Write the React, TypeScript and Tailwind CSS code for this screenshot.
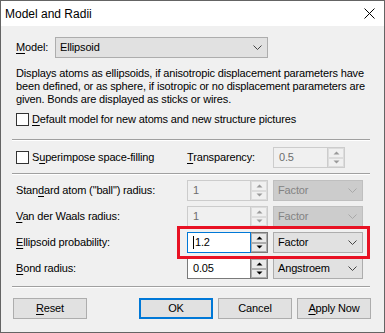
import React from "react";

const font = "font-['Liberation_Sans',Arial,sans-serif]";

function Chevron({ disabled }: { disabled?: boolean }) {
  return (
    <svg width="10" height="6" viewBox="0 0 10 6" className="shrink-0">
      <polyline
        points="0.5,0.5 4.5,4.5 8.5,0.5"
        fill="none"
        stroke={disabled ? "#a8a8a8" : "#444"}
        strokeWidth="1"
      />
    </svg>
  );
}

function Arrow({ up, disabled }: { up?: boolean; disabled?: boolean }) {
  return (
    <svg width="7" height="4" viewBox="0 0 7 4">
      <polygon
        points={up ? "0.5,3.5 3.5,0.5 6.5,3.5" : "0.5,0.5 3.5,3.5 6.5,0.5"}
        fill={disabled ? "#9a9a9a" : "#000"}
      />
    </svg>
  );
}

function Combo({ value, className, disabled }: { value: string; className: string; disabled?: boolean }) {
  return (
    <div
      className={`flex h-[21px] items-center justify-between border pl-[4px] pr-[4px] ${className} ${
        disabled ? "border-[#bfbfbf] bg-[#cccccc] text-[#838383]" : "border-[#adadad] bg-[#e1e1e1] text-black"
      }`}
    >
      <span>{value}</span>
      <Chevron disabled={disabled} />
    </div>
  );
}

function Spin({
  value,
  className,
  disabled,
  focused,
}: {
  value: string;
  className: string;
  disabled?: boolean;
  focused?: boolean;
}) {
  const edge = disabled ? "border-[#cccccc]" : "border-[#7a7a7a]";
  return (
    <div className={`flex h-[21px] ${className}`}>
      <div
        className={`flex flex-1 items-center border pl-[5px] ${
          focused ? "border-[#0078d7] bg-white" : disabled ? `${edge} bg-[#f0f0f0]` : `${edge} bg-white`
        } ${disabled ? "text-[#6d6d6d]" : "text-black"}`}
      >
        {focused && <span className="mr-[1px] h-[13px] w-[1px] bg-black" />}
        <span>{value}</span>
      </div>
      <div className={`flex w-[17px] flex-col border-y border-r ${edge} bg-[#f0f0f0]`}>
        <div
          className={`flex flex-1 items-center justify-center border ${
            disabled ? "border-[#dcdcdc]" : "border-[#adadad] bg-[#e9e9e9]"
          }`}
        >
          <Arrow up disabled={disabled} />
        </div>
        <div
          className={`flex flex-1 items-center justify-center border ${
            disabled ? "border-[#dcdcdc]" : "border-[#adadad] bg-[#e9e9e9]"
          }`}
        >
          <Arrow disabled={disabled} />
        </div>
      </div>
    </div>
  );
}

function Check({ children }: { children: React.ReactNode }) {
  return (
    <div className="flex h-[13px] items-center">
      <div className="h-[13px] w-[13px] shrink-0 border border-[#333] bg-white" />
      <span className="ml-[3px] whitespace-nowrap">{children}</span>
    </div>
  );
}

function Separator() {
  return (
    <div className="ml-[-4px] w-[358px]">
      <div className="h-[1px] bg-[#a0a0a0]" />
      <div className="h-[1px] bg-white" />
    </div>
  );
}

function Button({ children, primary }: { children: React.ReactNode; primary?: boolean }) {
  return (
    <div
      className={`flex h-[21px] w-[74px] items-center justify-center bg-[#e1e1e1] ${
        primary ? "border-2 border-[#0078d7]" : "border border-[#adadad]"
      }`}
    >
      {children}
    </div>
  );
}

const U = ({ children }: { children: React.ReactNode }) => <span className="underline underline-offset-2">{children}</span>;

export default function App() {
  return (
    <div
      className={`flex h-[333px] w-[385px] flex-col overflow-hidden border border-[#646464] bg-[#f0f0f0] text-[11px] tracking-[-0.15px] text-black ${font}`}
    >
      {/* Title bar */}
      <div className="flex h-[25px] shrink-0 items-center justify-between bg-white pl-[4px] pr-[9px]">
        <span className="text-[12px] tracking-normal">Model and Radii</span>
        <svg width="11" height="11" viewBox="0 0 11 11">
          <path d="M0.5 0.5 L10.5 10.5 M10.5 0.5 L0.5 10.5" stroke="#000" strokeWidth="1" />
        </svg>
      </div>

      <div className="flex flex-col pl-[15px]">
        {/* Model */}
        <div className="mt-[11px] flex items-center">
          <span className="w-[39px]">
            <U>M</U>odel:
          </span>
          <Combo value="Ellipsoid" className="w-[213px]" />
        </div>

        <p className="mt-[9px] whitespace-nowrap leading-[13px]">
          Displays atoms as ellipsoids, if anisotropic displacement parameters have
          <br />
          been defined, or as sphere, if isotropic or no displacement parameters are
          <br />
          given. Bonds are displayed as sticks or wires.
        </p>

        <div className="mt-[7px]">
          <Check>
            <U>D</U>efault model for new atoms and new structure pictures
          </Check>
        </div>

        <div className="mt-[13px]">
          <Separator />
        </div>

        {/* Superimpose */}
        <div className="mt-[6px] flex items-center">
          <div className="w-[171px]">
            <Check>
              S<U>u</U>perimpose space-filling
            </Check>
          </div>
          <span className="w-[86px]">
            <U>T</U>ransparency:
          </span>
          <Spin value="0.5" className="w-[72px]" disabled />
        </div>

        <div className="mt-[5px]">
          <Separator />
        </div>

        {/* Radii rows */}
        <div className="mt-[5px] flex flex-col gap-[5px]">
          <div className="flex items-center">
            <span className="w-[171px]">
              Stan<U>d</U>ard atom ("ball") radius:
            </span>
            <Spin value="1" className="w-[81px]" disabled />
            <Combo value="Factor" className="ml-[5px] w-[90px]" disabled />
          </div>
          <div className="flex items-center">
            <span className="w-[171px]">
              <U>V</U>an der Waals radius:
            </span>
            <Spin value="1" className="w-[81px]" disabled />
            <Combo value="Factor" className="ml-[5px] w-[90px]" disabled />
          </div>
          <div className="relative flex items-center">
            <span className="w-[171px]">
              <U>E</U>llipsoid probability:
            </span>
            <Spin value="1.2" className="w-[81px]" focused />
            <Combo value="Factor" className="ml-[5px] w-[90px]" />
            <div className="absolute left-[161px] top-[-6px] h-[33px] w-[193px] border-[3px] border-[#e81123]" />
          </div>
          <div className="flex items-center">
            <span className="w-[171px]">
              <U>B</U>ond radius:
            </span>
            <Spin value="0.05" className="w-[81px]" />
            <Combo value="Angstroem" className="ml-[5px] w-[90px]" />
          </div>
        </div>

        <div className="mt-[7px]">
          <Separator />
        </div>

        {/* Buttons */}
        <div className="ml-[-3px] mt-[10px] flex items-center">
          <Button>
            <U>R</U>eset
          </Button>
          <div className="ml-[52px] flex gap-[5px]">
            <Button primary>OK</Button>
            <Button>Cancel</Button>
            <Button>
              <U>A</U>pply Now
            </Button>
          </div>
        </div>
      </div>
    </div>
  );
}
